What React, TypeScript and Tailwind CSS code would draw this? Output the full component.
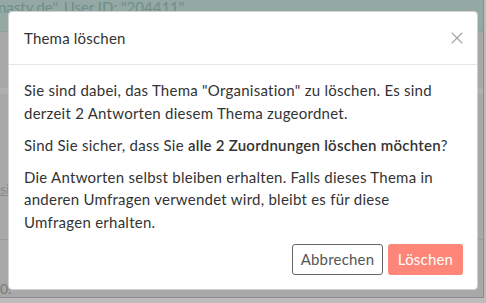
import { X } from "lucide-react";

export default function App() {
  return (
    <div
      className="relative h-[303px] w-[486px] overflow-hidden bg-[#bcbcbc]"
      style={{ fontFamily: "Lato, 'Open Sans', sans-serif" }}
    >
      {/* dimmed page behind the dialog */}
      <div className="h-[298px] w-[484px] border-r border-b border-[#8c8c8c] bg-[#a8a8a8]">
        <div className="h-[32px] border-b border-[#8fa09d] bg-[#94a8a4] text-[15px] leading-[14px] text-[#6f8f88]">
          <span className="-ml-[2px]">nasty.de", User ID: "204411"</span>
        </div>
        <div className="mt-[56px] h-[6px] bg-[#b0b0b0]" />
        <div className="mt-[84px] text-[14px] text-[#8a8a8a] underline">sic</div>
        <div className="mt-[40px] h-px bg-[#9a9a9a]" />
        <div className="mt-[38px] text-[14px] text-[#7a7a7a]">0!</div>
      </div>

      {/* dialog */}
      <div className="absolute left-[8px] top-[11px] w-[470px] rounded-[4px] border border-[#d0d0d0] bg-white text-[#333]">
        <div className="flex h-[53px] items-center justify-between border-b border-[#e3e6ea] pl-[15px] pr-[10px]">
          <h4 className="text-[15px] tracking-[0.2px] text-[#333]">Thema löschen</h4>
          <X className="h-[20px] w-[20px] text-[#a3a3a3]" strokeWidth={1.3} />
        </div>
        <div className="px-[15px] pt-[14px] text-[15px] leading-[22.5px] tracking-[0.25px]">
          <p>
            Sie sind dabei, das Thema "Organisation" zu löschen. Es sind derzeit 2 Antworten diesem
            Thema zugeordnet.
          </p>
          <p className="mt-[10px]">
            Sind Sie sicher, dass Sie <span className="font-semibold">alle 2 Zuordnungen löschen möchten</span>?
          </p>
          <p className="mt-[9px]">
            Die Antworten selbst bleiben erhalten. Falls dieses Thema in anderen Umfragen verwendet
            wird, bleibt es für diese <br />
            Umfragen erhalten.
          </p>
        </div>
        <div className="flex justify-end gap-[5px] px-[14px] pt-[11px] pb-[14px]">
          <button className="h-[31px] w-[91px] rounded-[3px] border border-[#666] bg-white text-[15px] tracking-[0.2px] text-[#555]">
            Abbrechen
          </button>
          <button className="h-[31px] w-[75px] rounded-[3px] bg-[#fe8678] text-[15px] tracking-[0.2px] text-white">
            Löschen
          </button>
        </div>
      </div>
    </div>
  );
}
